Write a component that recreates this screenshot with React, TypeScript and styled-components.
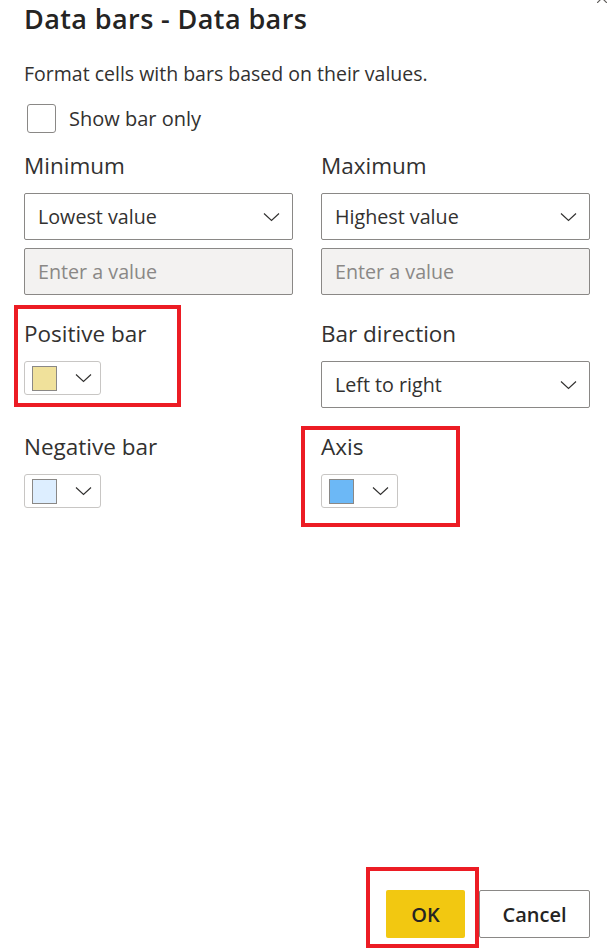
import React from "react";
import styled, { createGlobalStyle } from "styled-components";

const Global = createGlobalStyle`
  html, body { margin: 0; padding: 0; background: #ffffff; }
  body { font-family: "Open Sans", "Noto Sans", sans-serif; color: #323130; }
  * { box-sizing: border-box; }
`;

const Dialog = styled.div`
  position: relative;
  height: 952px;
  display: flex;
  flex-direction: column;
  padding: 0 26px 14px 24px;
  overflow: hidden;
`;

const CloseGlyph = styled.svg`
  position: absolute;
  top: -7px;
  right: 9px;
  width: 10px;
  height: 10px;
`;

const Title = styled.h1`
  margin: 0;
  font-size: 27px;
  line-height: 38px;
  font-weight: 600;
  color: #252423;
  letter-spacing: 0.4px;
`;

const Description = styled.p`
  margin: 24px 0 0;
  font-size: 19.5px;
  line-height: 24px;
  color: #323130;
`;

const CheckRow = styled.label`
  display: flex;
  align-items: center;
  gap: 13px;
  margin: 18px 0 0 3px;
  font-size: 20px;
  line-height: 29px;
  color: #323130;
`;

const CheckBox = styled.span`
  width: 29px;
  height: 29px;
  border: 1px solid #8a8886;
  border-radius: 3px;
  background: #fff;
`;

const Grid = styled.div`
  display: grid;
  grid-template-columns: 269px 269px;
  align-items: start;
  column-gap: 28px;
  row-gap: 25px;
  margin-top: 19px;
`;

type Insets = [number, number, number, number];

const Field = styled.div<{ $hl?: Insets }>`
  position: relative;
  display: flex;
  flex-direction: column;
  align-items: flex-start;
  ${(p) =>
    p.$hl
      ? `&::after {
      content: "";
      position: absolute;
      top: ${p.$hl[0]}px;
      right: ${p.$hl[1]}px;
      bottom: ${p.$hl[2]}px;
      left: ${p.$hl[3]}px;
      border: 4px solid #ec1c24;
      pointer-events: none;
    }`
      : ""}
`;

const Label = styled.div`
  font-size: 22.5px;
  line-height: 28px;
  color: #323130;
  margin-bottom: 13px;
`;

const Select = styled.div`
  width: 100%;
  height: 47px;
  border: 1px solid #8a8886;
  border-radius: 2px;
  display: flex;
  align-items: center;
  justify-content: space-between;
  padding: 0 12px 0 13px;
  font-size: 19.7px;
  color: #323130;
  background: #fff;
`;

const Input = styled.div`
  width: 100%;
  height: 47px;
  margin-top: 8px;
  border: 1px solid #8a8886;
  border-radius: 2px;
  display: flex;
  align-items: center;
  padding: 0 13px;
  font-size: 19.7px;
  color: #8a8886;
  background: #f3f2f1;
`;

const Picker = styled.div`
  width: 77px;
  height: 34px;
  border: 1px solid #c8c6c4;
  border-radius: 3px;
  display: flex;
  align-items: center;
  justify-content: space-between;
  padding: 0 8px 0 7px;
  background: #fff;
`;

const Swatch = styled.span<{ $c: string }>`
  width: 25px;
  height: 25px;
  border: 1px solid #8a8886;
  background: ${(p) => p.$c};
`;

const Footer = styled.div`
  margin-top: auto;
  display: flex;
  justify-content: flex-end;
  gap: 14px;
`;

const Button = styled.button<{ $primary?: boolean }>`
  height: 48px;
  border-radius: 2px;
  font-family: inherit;
  font-size: 20px;
  font-weight: 600;
  color: #252423;
  padding: 0;
  ${(p) =>
    p.$primary
      ? `width: 79px; background: #f2c811; border: none;`
      : `width: 111px; background: #fff; border: 1px solid #8a8886;`}
`;

const Chevron = () => (
  <svg width={17} height={10} viewBox="0 0 17 10" fill="none">
    <path d="M1 1.5 L8.5 8.5 L16 1.5" stroke="#323130" strokeWidth="1.15" />
  </svg>
);

const SelectBox = ({ value }: { value: string }) => (
  <Select>
    <span>{value}</span>
    <Chevron />
  </Select>
);

const ColorPicker = ({ color }: { color: string }) => (
  <Picker>
    <Swatch $c={color} />
    <Chevron />
  </Picker>
);

export default function App() {
  return (
    <>
      <Global />
      <Dialog>
        <CloseGlyph viewBox="0 0 10 10">
          <path d="M0 0 L10 10 M10 0 L0 10" stroke="#605e5c" strokeWidth="1.2" />
        </CloseGlyph>
        <Title>Data bars - Data bars</Title>
        <Description>Format cells with bars based on their values.</Description>
        <CheckRow>
          <CheckBox />
          Show bar only
        </CheckRow>
        <Grid>
          <Field>
            <Label>Minimum</Label>
            <SelectBox value="Lowest value" />
            <Input>Enter a value</Input>
          </Field>
          <Field>
            <Label>Maximum</Label>
            <SelectBox value="Highest value" />
            <Input>Enter a value</Input>
          </Field>
          <Field $hl={[-15, 112, -12, -10]}>
            <Label>Positive bar</Label>
            <ColorPicker color="#f0e19b" />
          </Field>
          <Field>
            <Label>Bar direction</Label>
            <SelectBox value="Left to right" />
          </Field>
          <Field>
            <Label>Negative bar</Label>
            <ColorPicker color="#ddeeff" />
          </Field>
          <Field $hl={[-7, 130, -19, -20]}>
            <Label>Axis</Label>
            <ColorPicker color="#6cb8f6" />
          </Field>
        </Grid>
        <Footer>
          <Field $hl={[-23, -14, -10, -20]}>
            <Button $primary>OK</Button>
          </Field>
          <Button>Cancel</Button>
        </Footer>
      </Dialog>
    </>
  );
}
